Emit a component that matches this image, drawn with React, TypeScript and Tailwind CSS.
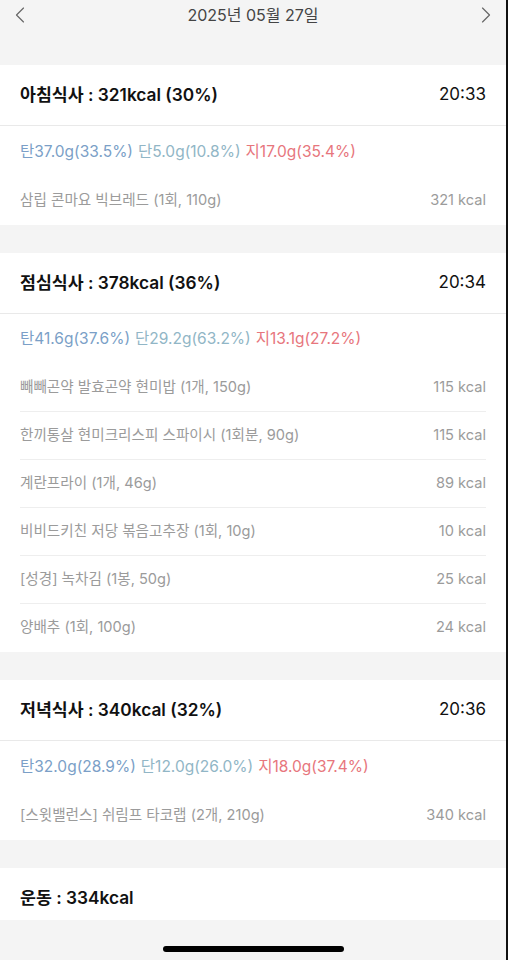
import React from 'react';
import { ChevronLeft, ChevronRight } from 'lucide-react';

interface Food {
  name: string;
  kcal: number;
}

interface Meal {
  title: string;
  time: string;
  carb: string;
  protein: string;
  fat: string;
  foods: Food[];
}

const meals: Meal[] = [
  {
    title: '아침식사 : 321kcal (30%)',
    time: '20:33',
    carb: '탄37.0g(33.5%)',
    protein: '단5.0g(10.8%)',
    fat: '지17.0g(35.4%)',
    foods: [{ name: '삼립 콘마요 빅브레드 (1회, 110g)', kcal: 321 }],
  },
  {
    title: '점심식사 : 378kcal (36%)',
    time: '20:34',
    carb: '탄41.6g(37.6%)',
    protein: '단29.2g(63.2%)',
    fat: '지13.1g(27.2%)',
    foods: [
      { name: '빼빼곤약 발효곤약 현미밥 (1개, 150g)', kcal: 115 },
      { name: '한끼통살 현미크리스피 스파이시 (1회분, 90g)', kcal: 115 },
      { name: '계란프라이 (1개, 46g)', kcal: 89 },
      { name: '비비드키친 저당 볶음고추장 (1회, 10g)', kcal: 10 },
      { name: '[성경] 녹차김 (1봉, 50g)', kcal: 25 },
      { name: '양배추 (1회, 100g)', kcal: 24 },
    ],
  },
  {
    title: '저녁식사 : 340kcal (32%)',
    time: '20:36',
    carb: '탄32.0g(28.9%)',
    protein: '단12.0g(26.0%)',
    fat: '지18.0g(37.4%)',
    foods: [{ name: '[스윗밸런스] 쉬림프 타코랩 (2개, 210g)', kcal: 340 }],
  },
];

const MealCard: React.FC<{ meal: Meal }> = ({ meal }) => (
  <div className="bg-white">
    <div className="h-[61px] flex items-center justify-between px-5 border-b border-[#e9e9e9]">
      <span className="text-[17.3px] font-semibold text-[#111]">{meal.title}</span>
      <span className="text-[17px] text-[#111]">{meal.time}</span>
    </div>
    <div className="h-[50.5px] flex items-center px-5 text-[15.5px] gap-[5px]">
      <span className="text-[#7b9fc7]">{meal.carb}</span>
      <span className="text-[#91b6c6]">{meal.protein}</span>
      <span className="text-[#e7767d]">{meal.fat}</span>
    </div>
    <div className="mx-5">
      {meal.foods.map((food, i) => (
        <div
          key={food.name}
          className={`h-12 flex items-center justify-between text-[14.6px] text-[#9b9b9b] ${
            i < meal.foods.length - 1 ? 'border-b border-[#eeeeee]' : ''
          }`}
        >
          <span>{food.name}</span>
          <span>{food.kcal} kcal</span>
        </div>
      ))}
    </div>
  </div>
);

export default function App() {
  return (
    <div
      className="w-[508px] h-[960px] overflow-hidden bg-[#f4f4f4] border-r-2 border-[#111] flex flex-col"
      style={{ fontFamily: 'Inter, "Noto Sans CJK KR", sans-serif' }}
    >
      <div className="h-[65px] shrink-0">
        <div className="h-[30px] flex items-center justify-between px-[6px]">
          <ChevronLeft size={28} strokeWidth={1} className="text-[#666]" />
          <span className="text-[16px] text-[#444]">2025년 05월 27일</span>
          <ChevronRight size={28} strokeWidth={1} className="text-[#666]" />
        </div>
      </div>
      <div className="flex flex-col gap-7">
        {meals.map((meal) => (
          <MealCard key={meal.title} meal={meal} />
        ))}
        <div className="bg-white h-[52px] flex items-center px-5 pt-2">
          <span className="text-[17.3px] font-semibold text-[#111]">운동 : 334kcal</span>
        </div>
      </div>
      <div className="flex-1 flex items-end justify-center pb-[8px]">
        <div className="w-[181px] h-[6px] rounded-full bg-black" />
      </div>
    </div>
  );
}
